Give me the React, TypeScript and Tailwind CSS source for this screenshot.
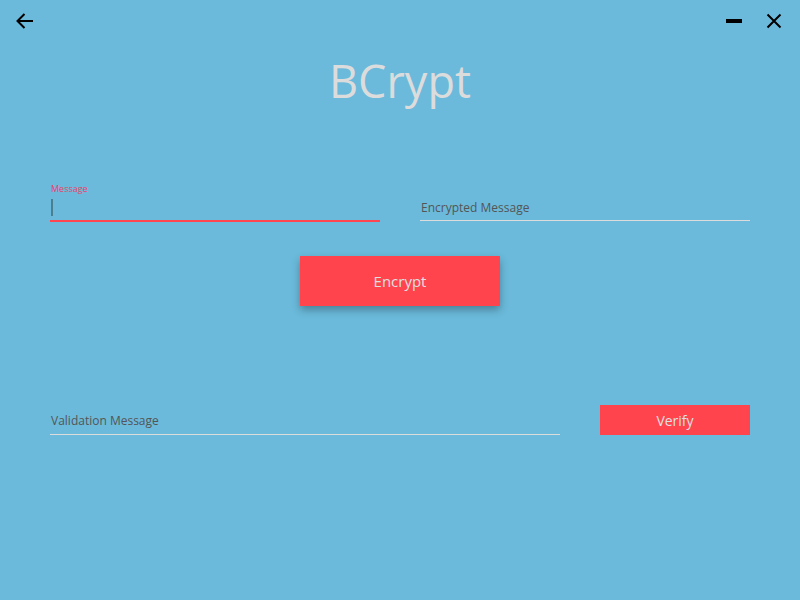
import React from "react";

export default function App() {
  const font = { fontFamily: '"Open Sans", "Noto Sans", sans-serif' };
  return (
    <div className="w-[800px] h-[600px] bg-[#6bbadb] flex flex-col overflow-hidden" style={font}>
      <div className="h-[40px] flex items-center justify-between px-[16px]">
        <svg width="18" height="16" viewBox="0 0 18 16" className="mt-[2px]">
          <path d="M1.5 8 H17" stroke="#000" strokeWidth="2" fill="none" />
          <path d="M8.5 1 L1.5 8 L8.5 15" stroke="#000" strokeWidth="2" fill="none" />
        </svg>
        <div className="flex items-center gap-[24px] mr-[2px]">
          <div className="w-[16px] h-[4px] bg-black mt-[2px]" />
          <svg width="16" height="16" viewBox="0 0 16 16" className="mt-[2px]">
            <path d="M1.5 1.5 L14.5 14.5 M14.5 1.5 L1.5 14.5" stroke="#000" strokeWidth="2" fill="none" />
          </svg>
        </div>
      </div>
      <div className="flex justify-center mt-[9px]">
        <div className="text-[45px] leading-[64px] text-[#dcdcdc]">BCrypt</div>
      </div>
      <div className="flex justify-between px-[50px] mt-[72px]">
        <div className="w-[330px] flex flex-col">
          <div className="text-[9px] leading-[12px] text-[#e8456a] pl-[1px] mt-[-2px]">Message</div>
          <div className="h-[20px] flex items-center pl-[1px] mt-[2px]">
            <div className="w-[2px] h-[17px] bg-[#4a7f92]" />
          </div>
          <div className="h-[2px] bg-[#ff4550] mt-[3px]" />
        </div>
        <div className="w-[330px] flex flex-col justify-end">
          <div className="text-[12px] leading-[16px] text-[#555] pl-[1px] mb-[4px]">Encrypted Message</div>
          <div className="h-[1px] bg-[#dcdcdc] mb-[1px]" />
        </div>
      </div>
      <div className="flex justify-center mt-[34px]">
        <div className="w-[200px] h-[50px] bg-[#ff444e] flex items-center justify-center text-[15px] text-[#e0e0e0] shadow-[0_4px_8px_rgba(0,0,0,0.3)]">
          Encrypt
        </div>
      </div>
      <div className="flex justify-between items-end px-[50px] mt-[99px]">
        <div className="w-[510px] flex flex-col">
          <div className="text-[12px] leading-[16px] text-[#555] pl-[1px] mb-[5px]">Validation Message</div>
          <div className="h-[1px] bg-[#dcdcdc]" />
        </div>
        <div className="w-[150px] h-[30px] bg-[#ff444e] flex items-center justify-center text-[14px] text-[#e0e0e0]">
          Verify
        </div>
      </div>
    </div>
  );
}
